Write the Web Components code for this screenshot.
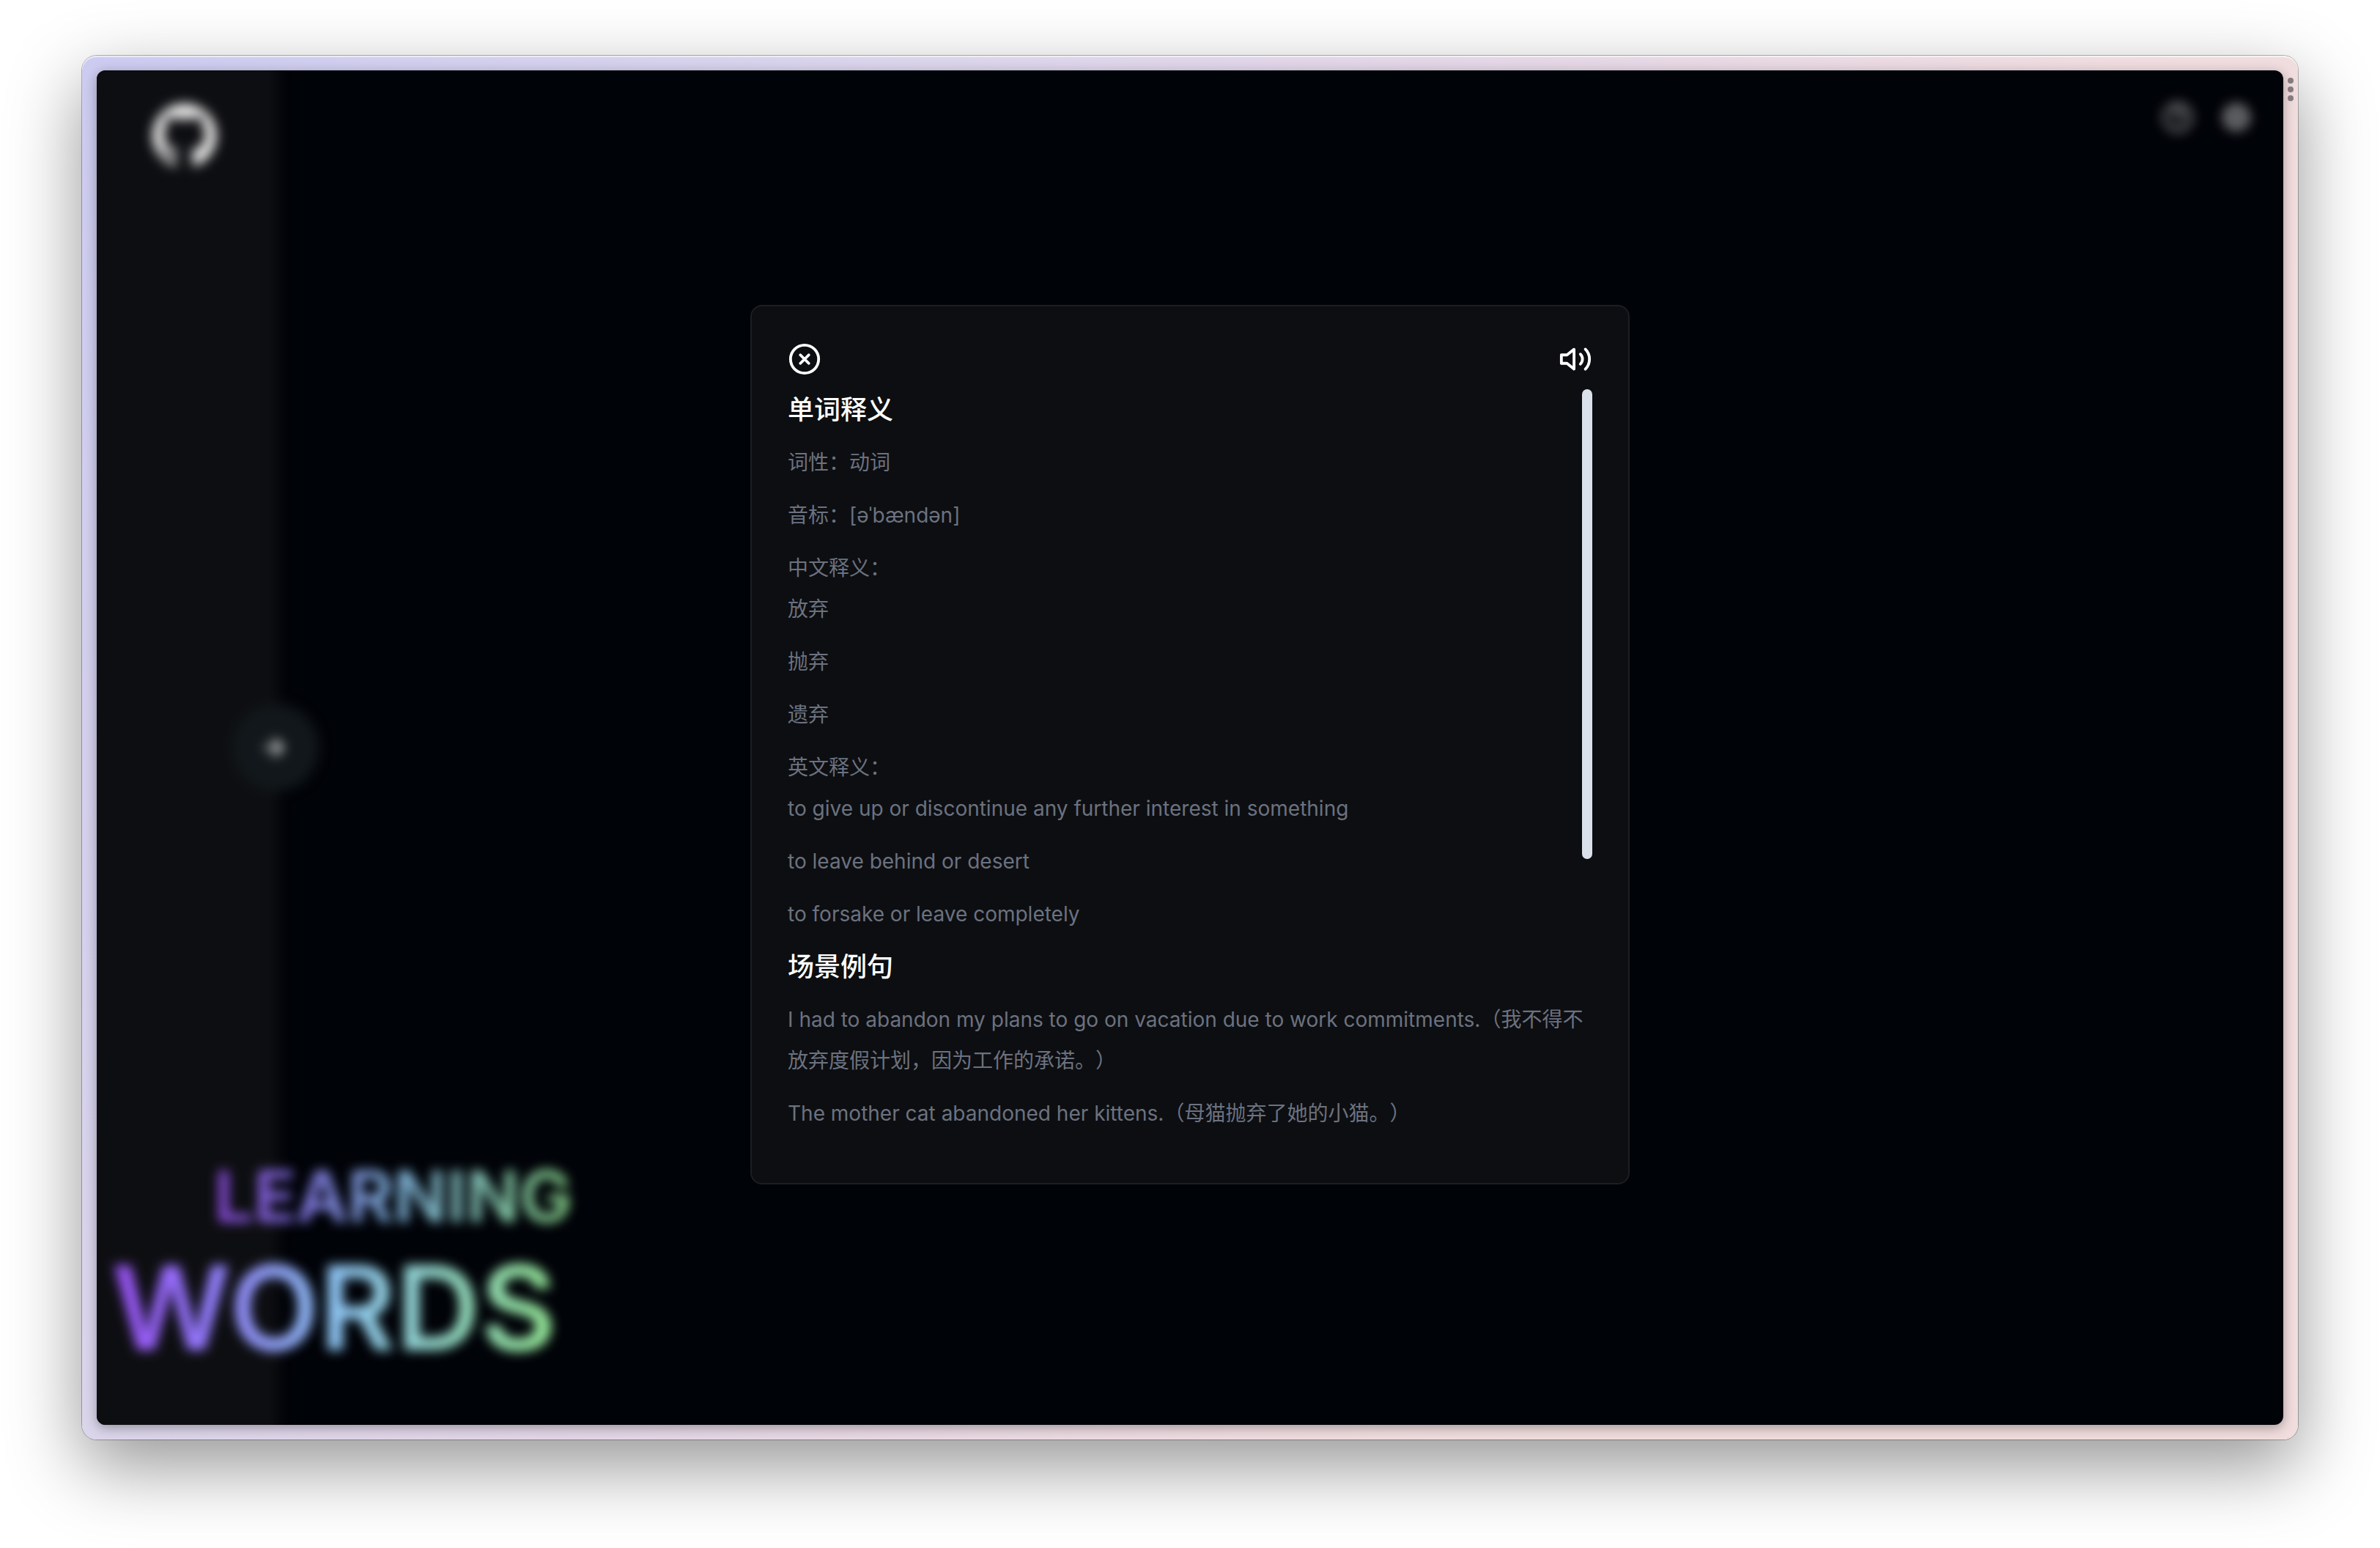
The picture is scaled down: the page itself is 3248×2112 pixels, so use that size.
<!DOCTYPE html>
<html lang="zh-CN">
<head>
<meta charset="utf-8">
<title>Learning Words</title>
<style>
  html, body { height: 100%; }
  body {
    margin: 0;
    background: #fff;
    color: #fff;
    font-family: Inter, "Noto Sans CJK SC", sans-serif;
    font-size: 28px;
    line-height: 56px;
  }
  /* Reset for the prose slotted into a word-section */
  word-section p, word-section ul { margin: 0; padding: 0; list-style: none; text-spacing-trim: space-all; }
  word-section ul { display: grid; gap: 16px; }
</style>
</head>
<body>
<app-window>
  <word-home slot="page"></word-home>
  <word-dialog slot="overlay">
    <word-section heading="单词释义">
      <p>词性：动词</p>
      <p>音标：[əˈbændən]</p>
      <div>
        <p>中文释义：</p>
        <ul><li>放弃</li><li>抛弃</li><li>遗弃</li></ul>
      </div>
      <div>
        <p>英文释义：</p>
        <ul>
          <li>to give up or discontinue any further interest in something</li>
          <li>to leave behind or desert</li>
          <li>to forsake or leave completely</li>
        </ul>
      </div>
    </word-section>
    <word-section heading="场景例句">
      <p>I had to abandon my plans to go on vacation due to work commitments.（我不得不放弃度假计划，因为工作的承诺。）</p>
      <p>The mother cat abandoned her kittens.（母猫抛弃了她的小猫。）</p>
    </word-section>
  </word-dialog>
</app-window>

<script>
const define = (name, html, setup) => {
  customElements.define(name, class extends HTMLElement {
    constructor() {
      super();
      this.attachShadow({ mode: "open" }).innerHTML = html;
    }
    connectedCallback() { if (setup) setup(this, this.shadowRoot); }
  });
};

/* Desktop window: tinted frame around a rounded page */
define("app-window", `
<style>
  :host { display: flex; box-sizing: border-box; height: 100vh; padding: 76px 112px 148px; }
  .frame {
    position: relative; flex: 1; display: flex; min-width: 0; padding: 20px; border-radius: 20px;
    background: linear-gradient(122deg, #cccbf0 0%, #dbd5eb 28%, #e3d6e6 45%, #efdce0 66%, #f1dddd 76%);
    box-shadow: 0 0 0 1px rgba(0,0,0,.28), inset 0 2px 1px rgba(255,255,255,.6),
      0 36px 100px rgba(0,0,0,.42);
  }
  .shade { flex: 1; display: flex; min-width: 0; border-radius: 12px; box-shadow: 0 4px 16px rgba(0,0,0,.32); }
  .page {
    flex: 1; display: grid; min-width: 0; overflow: hidden; border-radius: 12px; background: #000308;
  }
  ::slotted(*) { grid-area: 1 / 1; }
  .grip { position: absolute; right: 6px; top: 30px; display: grid; gap: 4px; }
  .grip i { width: 8px; height: 8px; border-radius: 50%; background: #857a7c; }
</style>
<div class="frame">
  <div class="shade"><div class="page"><slot name="page"></slot><slot name="overlay"></slot></div></div>
  <div class="grip"><i></i><i></i><i></i></div>
</div>`);

/* Page behind the dialog, softened while the dialog is open */
define("word-home", `
<style>
  :host { display: flex; position: relative; filter: blur(8px); }
  nav {
    position: relative; box-sizing: border-box; width: 248px; padding: 44px 76px;
    background: #0d0e11; box-shadow: -40px 0 0 #0d0e11, 0 -40px 0 #0d0e11, 0 40px 0 #0d0e11;
  }
  a, svg { display: block; }
  button { display: grid; place-items: center; padding: 0; border: 0; background: none; color: inherit; }
  .toggle {
    position: absolute; right: -56px; top: 50%; width: 120px; height: 120px; margin-top: -60px;
    border-radius: 50%; background: #11171a; z-index: 1;
  }
  header { flex: 1; display: flex; justify-content: flex-end; gap: 32px; padding: 40px; height: 48px; }
  h1 {
    position: absolute; left: 20px; bottom: 64px; margin: 0; display: grid;
    font-weight: 600; z-index: 1;
  }
  h1 span {
    color: transparent; -webkit-background-clip: text; background-clip: text; width: max-content;
    background-image: linear-gradient(to right, #9b50f6, #947dff 22%, #90c8f8 50%, #98ee98);
  }
  .small { font-size: 96px; line-height: 112px; margin-left: 140px; opacity: .92; }
  .big { font-size: 160px; line-height: 192px; }
</style>
<nav>
  <a href="#github" aria-label="GitHub">
    <svg width="88" height="88" viewBox="0 0 24 24" fill="#fff" fill-opacity=".9"><path d="M12 .3a12 12 0 0 0-3.8 23.38c.6.12.83-.26.83-.57L9 21.07c-3.34.72-4.04-1.61-4.04-1.61-.55-1.39-1.34-1.76-1.34-1.76-1.08-.74.09-.73.09-.73 1.2.09 1.83 1.24 1.83 1.24 1.08 1.83 2.81 1.3 3.5 1 .1-.78.42-1.31.76-1.61-2.67-.3-5.47-1.33-5.47-5.93 0-1.31.47-2.38 1.24-3.22-.14-.3-.54-1.52.1-3.18 0 0 1-.32 3.3 1.23a11.5 11.5 0 0 1 6 0c2.28-1.55 3.29-1.23 3.29-1.23.64 1.66.24 2.88.12 3.18a4.65 4.65 0 0 1 1.23 3.22c0 4.61-2.8 5.63-5.48 5.92.42.36.81 1.1.81 2.22l-.01 3.29c0 .31.2.69.82.57A12 12 0 0 0 12 .3"/></svg>
  </a>
  <button class="toggle" aria-label="展开">
    <svg width="36" height="36" viewBox="0 0 24 24" fill="none" stroke="#fff" stroke-opacity=".9" stroke-width="3" stroke-linecap="round" stroke-linejoin="round"><path d="M3 12h15M11 5l7 7-7 7"/></svg>
  </button>
</nav>
<header>
  <button aria-label="帮助"><svg width="48" height="48" viewBox="0 0 24 24" fill="none" stroke="#fff" stroke-opacity=".7" stroke-width="1.7" stroke-linecap="round"><circle cx="12" cy="12" r="9"/><path d="M9.1 9a3 3 0 0 1 5.8 1c0 2-3 3-3 3M12 17h.01"/></svg></button>
  <button aria-label="设置"><svg width="48" height="48" viewBox="0 0 24 24" fill="none" stroke="#fff" stroke-opacity=".7" stroke-width="2"><circle cx="12" cy="12" r="7"/><circle cx="12" cy="12" r="3"/><path d="M12 2v3M12 19v3M2 12h3M19 12h3M5 5l2 2M17 17l2 2M19 5l-2 2M7 17l-2 2"/></svg></button>
</header>
<h1><span class="small">LEARNING</span><span class="big">WORDS</span></h1>`);

/* Word details dialog */
define("word-dialog", `
<style>
  :host { place-self: center; display: grid; z-index: 2; padding-bottom: 8px; }
  section {
    box-sizing: border-box; width: 1200px; height: 1200px; padding: 49px; border: 2px solid #1c1e21;
    border-radius: 16px; background: #0d0e11; display: flex; flex-direction: column; gap: 18px;
  }
  header { display: flex; justify-content: space-between; }
  button { display: block; padding: 0; border: 0; background: none; color: #fff; }
  svg { display: block; }
  .scroll { position: relative; flex: 1; min-height: 0; }
  .content { display: flex; flex-direction: column; gap: 16px; }
  .thumb { position: absolute; right: 0; top: 0; width: 14px; height: 62%; border-radius: 7px; background: #dbe1eb; }
</style>
<section role="dialog" aria-label="单词释义">
  <header>
    <button aria-label="关闭"><svg width="46" height="46" viewBox="0 0 24 24" fill="none" stroke="currentColor" stroke-width="2" stroke-linecap="round"><circle cx="12" cy="12" r="10"/><path d="M15 9l-6 6M9 9l6 6"/></svg></button>
    <button aria-label="发音"><svg width="46" height="46" viewBox="0 0 24 24" fill="none" stroke="currentColor" stroke-width="2" stroke-linecap="round" stroke-linejoin="round"><path d="M11 5L6 9H2v6h4l5 4V5z"/><path d="M15.54 8.46a5 5 0 0 1 0 7.07M19.07 4.93a10 10 0 0 1 0 14.14"/></svg></button>
  </header>
  <div class="scroll">
    <div class="content"><slot></slot></div>
    <div class="thumb"></div>
  </div>
</section>`);

/* Heading with its paragraphs and lists */
define("word-section", `
<style>
  :host { display: flex; flex-direction: column; gap: 16px; color: #6b7280; }
  h2 { margin: 0; font-size: 36px; line-height: 56px; font-weight: 500; color: #fff; }
</style>
<h2></h2>
<slot></slot>`, (host, root) => {
  root.querySelector("h2").textContent = host.getAttribute("heading");
});
</script>
</body>
</html>
